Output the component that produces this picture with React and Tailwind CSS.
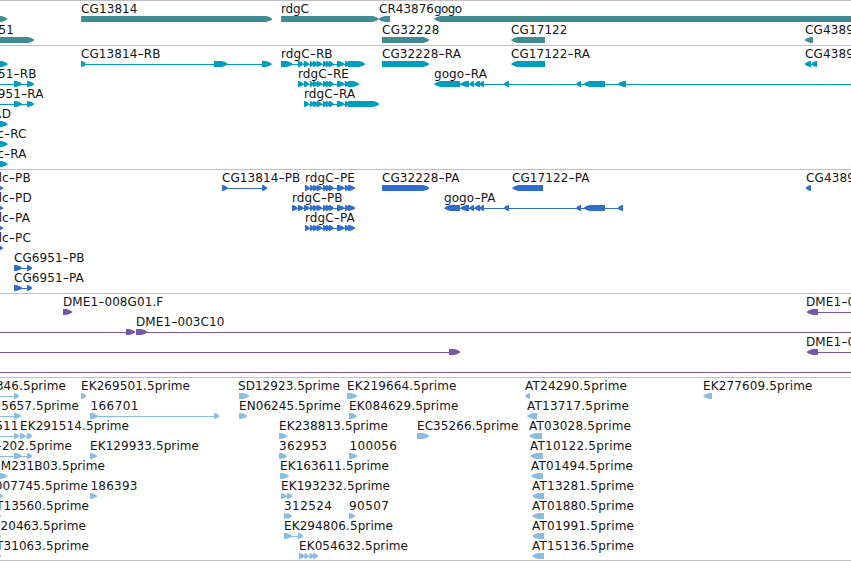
// Each label is [text, x, endX]; x = null anchors the text at endX, endX = null lets it run from x.
// Each glyph is [direction, lineStart, lineEnd, exons].
const CORE = [[310, 314], [313, 318], [316.5, 322.5], [323, 327.5], [326, 331], [329, 334], [337, 345], [345, 349.5]];
const GOGO = [[460, 469], [469, 474], [474, 480], [479, 484], [503.5, 509], [576, 581], [583.5, 605]];
const one = (d, a, b) => [d, a, a, [[a, b]]];

const tracks = [
  {
    color: '#408c93', rowClass: 'h-[21px]', endClass: 'pb-[2px]',
    rows: [
      { l: [['CG13814', 81, 137.5], ['rdgC', 281, 309], ['CR43876', 379, 434], ['gogo', 434, 462]],
        g: [one(1, -10, 7.5), one(1, 81, 272.5), one(1, 281, 379), one(-1, 378.5, 390), one(-1, 434, 870)] },
      { l: [['51', null, 14], ['CG32228', 382, 439.5], ['CG17122', 511, 567.5], ['CG4389', 805, 854]],
        g: [one(1, -10, 34.5), one(1, 382, 429.5), one(-1, 511, 545), one(-1, 804.5, 813)] },
    ],
  },
  {
    color: '#009dbf', rowClass: 'h-5', endClass: 'pb-[3px]',
    rows: [
      { l: [['CG13814-RB', 81, 160.5], ['rdgC-RB', 281, 331.5], ['CG32228-RA', 382, 463.5], ['CG17122-RA', 511, 592.5], ['CG4389', 805, 854]],
        g: [one(1, -10, 8), [1, 81, 270, [[81, 86.5], [214, 228], [262, 272]]],
          [1, 281, 360, [[281, 293], [298, 304], [304, 309.5], ...CORE, [348, 365.5]]],
          one(1, 382, 429.5), one(-1, 511, 545), [-1, 806, 815, [[804.5, 811], [811, 817]]]] },
      { l: [['951-RB', null, 36.5], ['rdgC-RE', 298, 348.5], ['gogo-RA', 434, 486.5]],
        g: [[1, -5, 30, [[14, 22.5], [27, 34.5]]], [1, 298, 355, [[298, 304], [304, 309.5], ...CORE, [348, 359.5]]],
          [-1, 440, 860, [[434, 460], ...GOGO, [617.5, 626]]]] },
      { l: [['951-RA', null, 43.5], ['rdgC-RA', 304, 356.5]],
        g: [[1, -5, 30, [[14, 22.5], [27, 34.5]]], [1, 304, 370, [[304, 309.5], ...CORE, [348, 379.5]]]] },
      { l: [['RD', null, 11]], g: [one(1, -10, 8)] },
      { l: [['c-RC', -2.7, null]], g: [one(1, -10, 8)] },
      { l: [['c-RA', -2.7, null]], g: [one(1, -10, 8)] },
    ],
  },
  {
    color: '#306dcd', rowClass: 'h-5', endClass: 'pb-[3px]',
    rows: [
      { l: [['lc-PB', -1.3, null], ['CG13814-PB', 222, 300.5], ['rdgC-PE', 305, 355], ['CG32228-PA', 382, 462.5], ['CG17122-PA', 512, 592.5], ['CG4389', 806, 855]],
        g: [one(1, -5, 3.5), [1, 222, 265, [[222, 228], [262, 267.5]]], [1, 305, 352, [[305, 310], ...CORE, [348, 355.5]]],
          one(1, 382, 429.5), one(-1, 512, 543), one(-1, 805.5, 811)] },
      { l: [['lc-PD', -1.3, null], ['rdgC-PB', 292, 341.5], ['gogo-PA', 444, 495.5]],
        g: [one(1, -5, 3.5), [1, 292, 352, [[292, 298], [298, 304], [304, 310], ...CORE, [348, 355.5]]],
          [-1, 450, 620, [[444, 460], ...GOGO, [617.5, 623]]]] },
      { l: [['lc-PA', -1.3, null], ['rdgC-PA', 305, 356.5]],
        g: [one(1, -5, 3.5), [1, 305, 352, [[305, 310], ...CORE, [348, 355.5]]]] },
      { l: [['lc-PC', -1.3, null]], g: [one(1, -5, 3.5)] },
      { l: [['CG6951-PB', 14, 84.5]], g: [[1, 14, 30, [[14, 22.5], [27, 32.5]]]] },
      { l: [['CG6951-PA', 14, 86.5]], g: [[1, 14, 30, [[14, 22.5], [27, 32.5]]]] },
    ],
  },
  {
    color: '#7657a6', rowClass: 'h-5', endClass: 'pb-[3px]',
    rows: [
      { l: [['DME1-008G01.F', 63, 163], ['DME1-0', 806, 855]],
        g: [one(1, 63, 72.5), [-1, 812, 860, [[806.5, 818]]]] },
      { l: [['DME1-003C10', 136, 225]],
        g: [[1, -5, 130, [[126, 135.5]]], [1, 140, 860, [[136, 147.5]]]] },
      { l: [['DME1-0', 806, 855]],
        g: [[1, -5, 455, [[449, 460.5]]], [-1, 812, 860, [[806.5, 818]]]] },
      { l: [], g: [[1, -5, 860, []]] },
    ],
  },
  {
    color: '#8abddf', rowClass: 'h-5', endClass: 'border-b pb-[2px]',
    rows: [
      { l: [['346.5prime', null, 66], ['EK269501.5prime', 81, 190], ['SD12923.5prime', 238, 340], ['EK219664.5prime', 347, 456.5], ['AT24290.5prime', 525, 627], ['EK277609.5prime', 703, 812.5]],
        g: [[1, -5, 17, [[14, 19.5]]], one(1, 81, 86.5), one(1, 239, 249.5), one(1, 347, 357.5), one(-1, 525, 530), one(-1, 703, 712)] },
      { l: [['5657.5prime', null, 79], ['166701', 90.4, 138.5], ['EN06245.5prime', 239, 341], ['EK084629.5prime', 349, 458.5], ['AT13717.5prime', 527, 629]],
        g: [[1, -5, 17, [[14, 21.5]]], [1, 90, 217, [[90, 98.5], [214, 219.5]]], one(1, 239, 247.5), one(1, 349, 357.5), one(-1, 527, 537)] },
      { l: [['511', null, 18.5], ['EK291514.5prime', 20, 129], ['EK238813.5prime', 279, 388], ['EC35266.5prime', 417, 518.5], ['AT03028.5prime', 529, 631]],
        g: [[1, -5, 17, [[14, 19.5]]], [1, 20, 30, [[20, 26], [27, 32.5]]], one(1, 279, 287.5), one(1, 417, 429.5), one(-1, 529, 542)] },
      { l: [['-202.5prime', null, 72], ['EK129933.5prime', 90, 199], ['362953', 279, 327], ['100056', 349.4, 397], ['AT10122.5prime', 530, 632]],
        g: [[1, -5, 30, [[14, 22.5], [27, 32.5]]], one(1, 90, 97.5), one(1, 279, 287.5), one(1, 349, 357.5), one(-1, 530, 543)] },
      { l: [['GM231B03.5prime', null, 105], ['EK163611.5prime', 280, 389], ['AT01494.5prime', 531, 633]],
        g: [one(1, -5, 7.5), one(1, 280, 289), one(-1, 531, 543)] },
      { l: [['007745.5prime', null, 88], ['186393', 90.4, 137.5], ['EK193232.5prime', 281, 390], ['AT13281.5prime', 532, 634]],
        g: [one(1, -5, 3.5), one(1, 90, 97.5), [1, 281, 290, [[281, 287], [287, 292.5]]], one(-1, 532, 544)] },
      { l: [['T13560.5prime', null, 89], ['312524', 284, 332], ['90507', 349, 389], ['AT01880.5prime', 532, 634]],
        g: [one(1, -5, 1.5), [1, 284, 290, [[284, 288.5], [287, 292]]], one(1, 349, 355.5), one(-1, 532, 544)] },
      { l: [['20463.5prime', null, 86], ['EK294806.5prime', 284, 393], ['AT01991.5prime', 532, 634]],
        g: [one(1, -5, 1.5), [1, 284, 300, [[284, 292.5], [298, 303.5]]], one(-1, 532, 544)] },
      { l: [['T31063.5prime', null, 89], ['EK054632.5prime', 299, 408], ['AT15136.5prime', 532, 634]],
        g: [one(1, -5, 1.5), [1, 299, 315, [[299, 305], [304.5, 309], [309.5, 314], [313, 318.5]]], one(-1, 532, 544)] },
    ],
  },
];

// A box whose leading end narrows in a convex curve to its tip.
function exonPoints(dir, a, b) {
  const head = Math.min(6, (b - a) * 0.8);
  const tip = dir > 0 ? b - 0.3 : a + 0.3;
  const tail = dir > 0 ? a : b;
  const neck = tip - dir * head;
  const mid = tip - dir * head * 0.45;
  return `${tail},15 ${neck},15 ${mid},16 ${tip},17.8 ${tip},18.4 ${mid},20 ${neck},21 ${tail},21`;
}

function Glyph({ glyph: [dir, from, to, exons] }) {
  return (
    <g>
      {to > from && <rect x={from} y="18" width={to - from} height="1" shapeRendering="crispEdges" />}
      {exons.map(([a, b], i) => <polygon key={i} points={exonPoints(dir, a, b)} />)}
    </g>
  );
}

// Hyphens are stretched to a wide dash; labels without one are fitted to their span.
function Label({ label: [text, x, end] }) {
  const cut = text.indexOf('-');
  const anchor = x === null ? 'end' : 'start';
  const at = x === null ? end : x;
  if (cut < 0) {
    return (
      <text x={at} y="12" textAnchor={anchor} letterSpacing={x === null ? 0.08 : undefined} textLength={x === null ? undefined : end - x}>
        {text}
      </text>
    );
  }
  return (
    <text x={at} y="12" textAnchor={anchor} letterSpacing="0.08">
      {text.slice(0, cut)}
      <tspan textLength="6.3" lengthAdjust="spacingAndGlyphs">-</tspan>
      {text.slice(cut + 1)}
    </text>
  );
}

export default function App() {
  return (
    <main className="h-[561px] w-[851px] overflow-hidden bg-white">
      {tracks.map((track, i) => (
        <section key={i} className={`flex flex-col border-t border-[#c0c0c0] ${track.endClass}`}>
          {track.rows.map((row, j) => (
            <svg key={j} width="851" className={`block w-[851px] shrink-0 overflow-visible font-['DejaVu_Sans',sans-serif] text-[12px] ${track.rowClass}`}>
              <g fill={track.color}>{row.g.map((glyph, k) => <Glyph key={k} glyph={glyph} />)}</g>
              <g fill="#141414">{row.l.map((label, k) => <Label key={k} label={label} />)}</g>
            </svg>
          ))}
        </section>
      ))}
    </main>
  );
}
